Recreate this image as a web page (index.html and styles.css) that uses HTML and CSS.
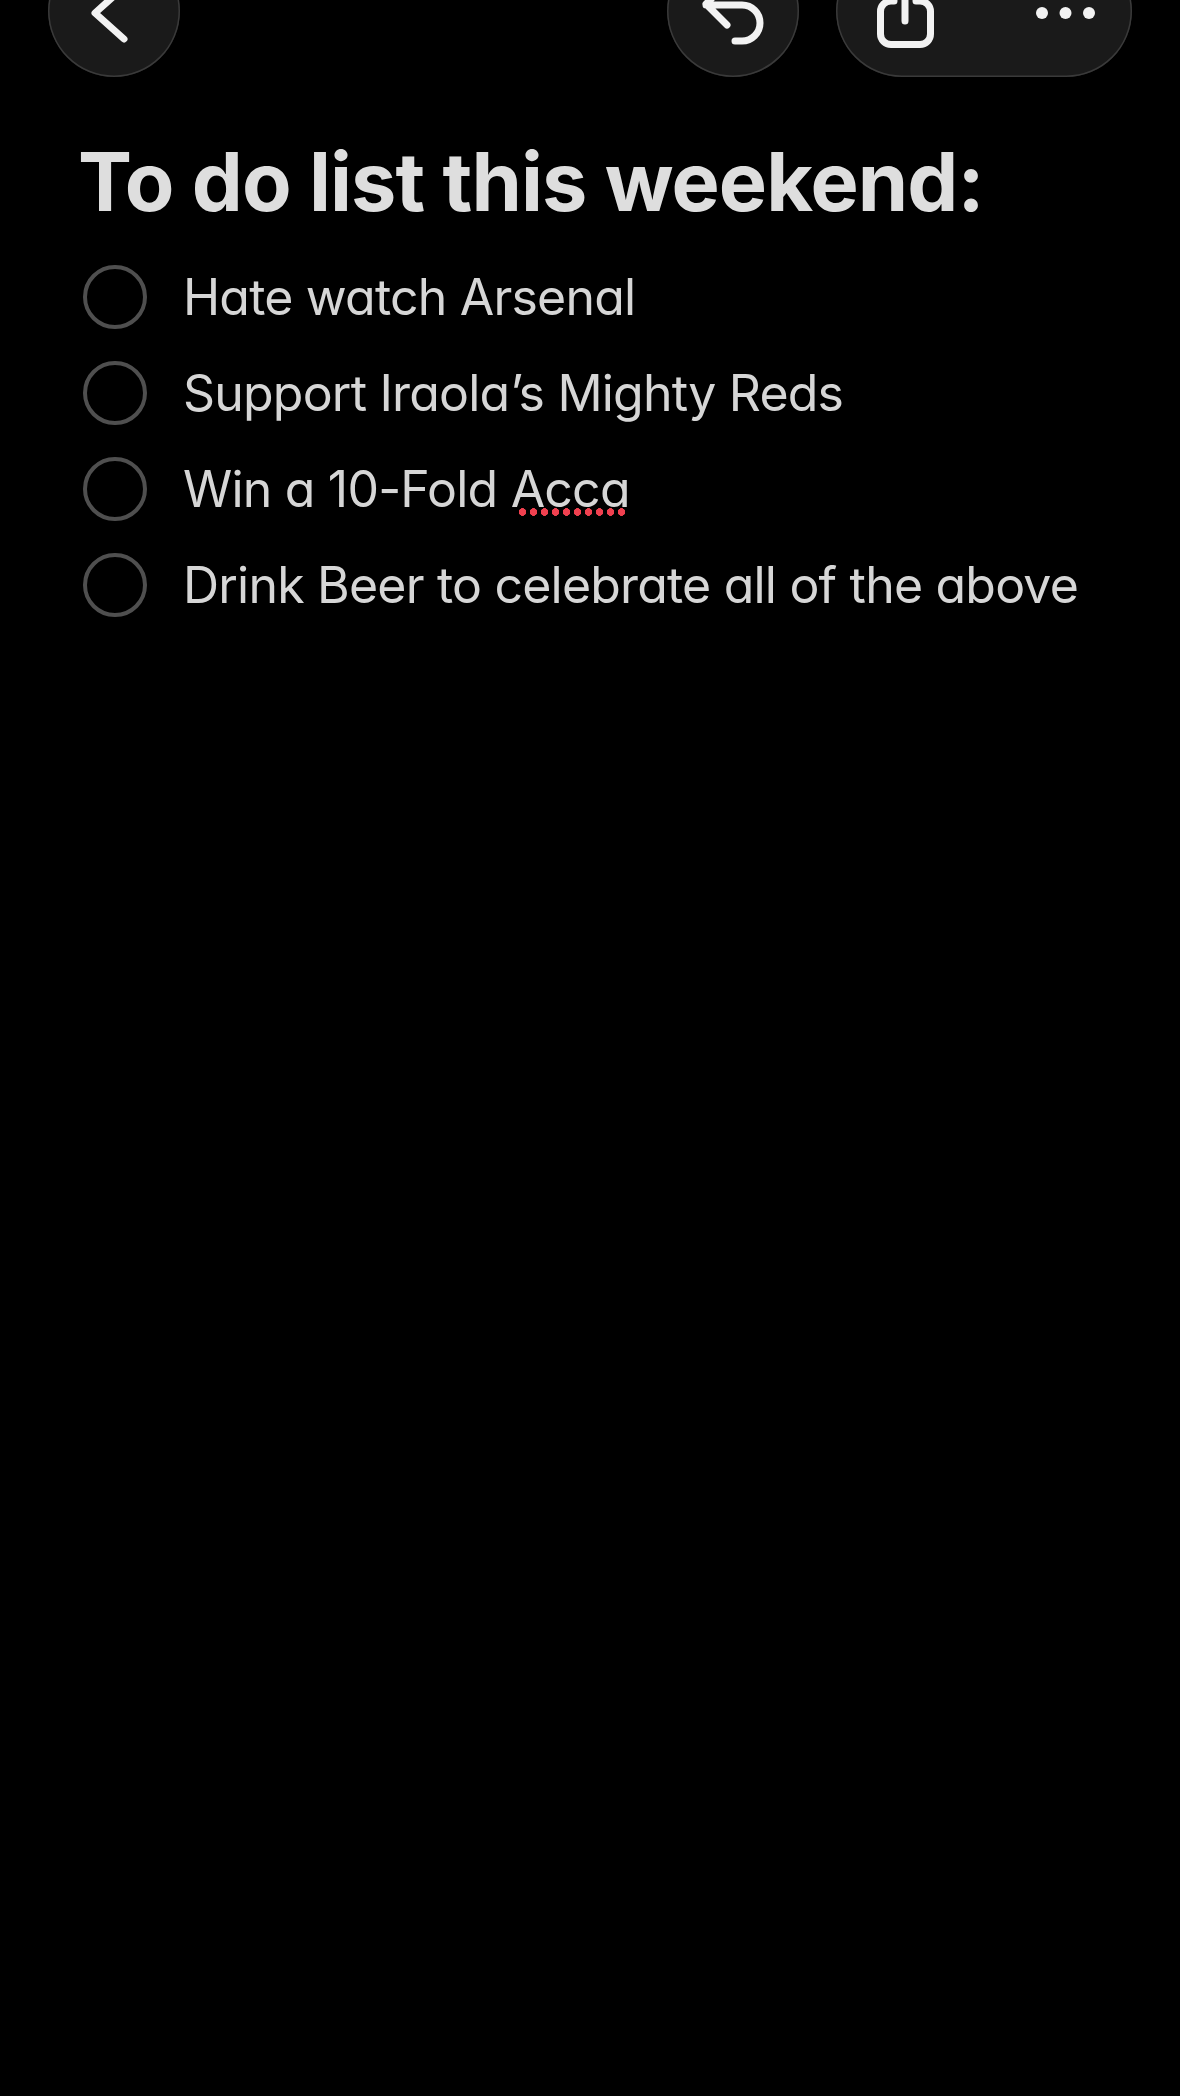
FILE: index.html
```html
<!DOCTYPE html>
<html lang="en">
<head>
<meta charset="UTF-8">
<meta name="viewport" content="width=device-width, initial-scale=1.0">
<title>To do list</title>
<link rel="stylesheet" href="styles.css">
</head>
<body>
<div class="toolbar">
    <div class="round-btn">
        <svg class="icon" width="132" height="132" viewBox="0 0 132 132"><path d="M76 42 L47 68 L76 94"/></svg>
    </div>
    <div class="toolbar-right">
        <div class="round-btn">
            <svg class="icon" width="132" height="132" viewBox="0 0 132 132"><path d="M60 38 L39 59 L60 80 M39 60 H75 A18 18 0 0 1 75 96 H68"/></svg>
        </div>
        <div class="pill-btn">
            <svg class="icon" width="296" height="132" viewBox="0 0 296 132">
                <path d="M58 56 H55 A10.500 10.500 0 0 0 44.500 66.500 V89 A10.500 10.500 0 0 0 55 99.500 H84 A10.500 10.500 0 0 0 94.500 89 V66.500 A10.500 10.500 0 0 0 84 56 H80 M69 76 V30"/>
                <circle class="dot" cx="206" cy="68" r="6"/>
                <circle class="dot" cx="229.500" cy="68" r="6"/>
                <circle class="dot" cx="253" cy="68" r="6"/>
            </svg>
        </div>
    </div>
</div>
<div class="note">
    <h1>To do list this weekend:</h1>
    <ul class="todo-list">
        <li><span class="check"></span>Hate watch Arsenal</li>
        <li><span class="check"></span>Support Iraola’s Mighty Reds</li>
        <li><span class="check"></span><span>Win a 10-Fold <span class="misspelt">Acca</span></span></li>
        <li><span class="check"></span>Drink Beer to celebrate all of the above</li>
    </ul>
</div>
</body>
</html>
```

FILE: styles.css
```css
html {
    background-color: #000;
}
body {
    font-family: Inter, "Liberation Sans", sans-serif;
    margin: 0;
    padding: 0;
    background-color: #000;
    color: #dedede;
}
.toolbar {
    display: flex;
    justify-content: space-between;
    margin-top: -55px;
    padding: 0 48px;
}
.toolbar-right {
    display: flex;
    gap: 37px;
}
.round-btn, .pill-btn {
    height: 132px;
    box-sizing: border-box;
    background-color: #1a1a1a;
    box-shadow: inset 0 0 0 1.5px #3a3a3a;
    border-radius: 66px;
}
.round-btn {
    width: 132px;
}
.pill-btn {
    width: 296px;
}
.icon {
    display: block;
    fill: none;
    stroke: #f2f2f2;
    stroke-width: 7;
    stroke-linecap: round;
    stroke-linejoin: round;
}
.icon .dot {
    fill: #f2f2f2;
    stroke: none;
}
.note {
    padding: 60px 0 0 78px;
}
h1 {
    margin: 0;
    font-size: 81px;
    font-weight: 700;
    line-height: 90px;
    letter-spacing: -0.92px;
}
.todo-list {
    list-style: none;
    margin: 0;
    padding: 22px 0 0 5px;
}
.todo-list li {
    display: flex;
    align-items: center;
    gap: 36px;
    height: 96px;
    font-size: 50px;
    font-weight: 400;
    letter-spacing: -0.8px;
    color: #d6d6d6;
    font-feature-settings: "cv11";
}
.check {
    width: 64px;
    height: 64px;
    box-sizing: border-box;
    border: 4px solid #4f4f4f;
    border-radius: 50%;
    flex-shrink: 0;
}
.misspelt {
    position: relative;
}
.misspelt::after {
    content: "";
    position: absolute;
    left: 6px;
    right: 2px;
    bottom: 3px;
    height: 8px;
    background: radial-gradient(circle at center, #f0404f 3.6px, transparent 4px) 0 0 / 11px 8px repeat-x;
}
```
